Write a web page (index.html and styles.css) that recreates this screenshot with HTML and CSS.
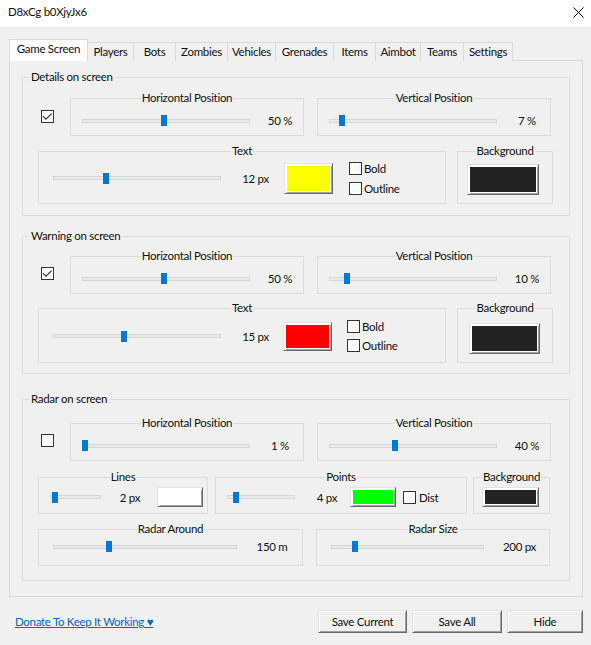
FILE: index.html
```html
<!DOCTYPE html>
<html>
<head>
<meta charset="utf-8">
<title>D8xCg b0XjyJx6</title>
<link rel="stylesheet" href="styles.css">
</head>
<body>
<div class="titlebar">
  <span class="title">D8xCg b0XjyJx6</span>
  <svg class="close" width="11" height="11" viewBox="0 0 11 11"><path d="M0.5 0.5L10.5 10.5M10.5 0.5L0.5 10.5" stroke="#000" stroke-width="1" fill="none"/></svg>
</div>

<div class="tabs">
  <div class="tab on t0">Game Screen</div>
  <div class="tab t1">Players</div>
  <div class="tab t2">Bots</div>
  <div class="tab t3">Zombies</div>
  <div class="tab t4">Vehicles</div>
  <div class="tab t5">Grenades</div>
  <div class="tab t6">Items</div>
  <div class="tab t7">Aimbot</div>
  <div class="tab t8">Teams</div>
  <div class="tab t9">Settings</div>
</div>

<div class="panel">
  <!-- Details on screen -->
  <div class="group g1">
    <div class="gtitle">Details on screen</div>
    <div class="row1">
      <span class="check on"><svg width="11" height="11" viewBox="0 0 11 11"><path d="M1 5.2L4 8.2L9.6 2.6" fill="none" stroke="#333" stroke-width="1.2"/></svg></span>
      <div class="box pos hpos">
        <div class="cap">Horizontal Position</div>
        <div class="srow">
          <div class="track w168"><span class="thumb" style="margin-left:78px"></span></div>
          <span class="val">50 %</span>
        </div>
      </div>
      <div class="box pos vpos">
        <div class="cap">Vertical Position</div>
        <div class="srow">
          <div class="track w168"><span class="thumb" style="margin-left:9px"></span></div>
          <span class="val">7 %</span>
        </div>
      </div>
    </div>
    <div class="row2">
      <div class="box textbox">
        <div class="cap">Text</div>
        <div class="crow">
          <div class="track w168"><span class="thumb" style="margin-left:49px"></span></div>
          <span class="val">12 px</span>
          <span class="sw txt yellow"></span>
          <div class="opts">
            <div class="opt"><span class="check"></span><span class="optlabel">Bold</span></div>
            <div class="opt"><span class="check"></span><span class="optlabel">Outline</span></div>
          </div>
        </div>
      </div>
      <div class="box bgbox">
        <div class="cap">Background</div>
        <div class="crow">
          <span class="sw bgc dark"></span>
        </div>
      </div>
    </div>
  </div>

  <!-- Warning on screen -->
  <div class="group g2">
    <div class="gtitle">Warning on screen</div>
    <div class="row1">
      <span class="check on"><svg width="11" height="11" viewBox="0 0 11 11"><path d="M1 5.2L4 8.2L9.6 2.6" fill="none" stroke="#333" stroke-width="1.2"/></svg></span>
      <div class="box pos hpos">
        <div class="cap">Horizontal Position</div>
        <div class="srow">
          <div class="track w168"><span class="thumb" style="margin-left:78px"></span></div>
          <span class="val">50 %</span>
        </div>
      </div>
      <div class="box pos vpos">
        <div class="cap">Vertical Position</div>
        <div class="srow">
          <div class="track w168"><span class="thumb" style="margin-left:14px"></span></div>
          <span class="val">10 %</span>
        </div>
      </div>
    </div>
    <div class="row2">
      <div class="box textbox">
        <div class="cap">Text</div>
        <div class="crow">
          <div class="track w168"><span class="thumb" style="margin-left:67px"></span></div>
          <span class="val">15 px</span>
          <span class="sw txt red"></span>
          <div class="opts">
            <div class="opt"><span class="check"></span><span class="optlabel">Bold</span></div>
            <div class="opt"><span class="check"></span><span class="optlabel">Outline</span></div>
          </div>
        </div>
      </div>
      <div class="box bgbox">
        <div class="cap">Background</div>
        <div class="crow">
          <span class="sw bgc dark"></span>
        </div>
      </div>
    </div>
  </div>

  <!-- Radar on screen -->
  <div class="group g3">
    <div class="gtitle">Radar on screen</div>
    <div class="row1">
      <span class="check"></span>
      <div class="box pos hpos">
        <div class="cap">Horizontal Position</div>
        <div class="srow">
          <div class="track w168"><span class="thumb" style="margin-left:-1px"></span></div>
          <span class="val">1 %</span>
        </div>
      </div>
      <div class="box pos vpos">
        <div class="cap">Vertical Position</div>
        <div class="srow">
          <div class="track w168"><span class="thumb" style="margin-left:62px"></span></div>
          <span class="val">40 %</span>
        </div>
      </div>
    </div>
    <div class="row2">
      <div class="box lines">
        <div class="cap">Lines</div>
        <div class="srow2">
          <div class="track w51"><span class="thumb" style="margin-left:1px"></span></div>
          <span class="val">2 px</span>
          <span class="sw small white"></span>
        </div>
      </div>
      <div class="box points">
        <div class="cap">Points</div>
        <div class="srow2">
          <div class="track w68"><span class="thumb" style="margin-left:5px"></span></div>
          <span class="val">4 px</span>
          <span class="sw small green"></span>
          <div class="opt dist"><span class="check"></span><span class="optlabel">Dist</span></div>
        </div>
      </div>
      <div class="box bg3">
        <div class="cap">Background</div>
        <div class="srow2">
          <span class="sw bgs dark"></span>
        </div>
      </div>
    </div>
    <div class="row3">
      <div class="box around">
        <div class="cap">Radar Around</div>
        <div class="srow3">
          <div class="track w184"><span class="thumb" style="margin-left:52px"></span></div>
          <span class="val">150 m</span>
        </div>
      </div>
      <div class="box rsize">
        <div class="cap">Radar Size</div>
        <div class="srow3">
          <div class="track w153"><span class="thumb" style="margin-left:20px"></span></div>
          <span class="val">200 px</span>
        </div>
      </div>
    </div>
  </div>
</div>

<div class="footer">
  <a class="link" href="#">Donate To Keep It Working ♥</a>
  <div class="btns">
    <span class="btn b1">Save Current</span>
    <span class="btn b2">Save All</span>
    <span class="btn b3">Hide</span>
  </div>
</div>
</body>
</html>
```

FILE: styles.css
```css
* { box-sizing: border-box; }

body {
  margin: 0;
  width: 591px;
  height: 645px;
  overflow: hidden;
  background: #f0f0f0;
  font-family: Lato, "Liberation Sans", "DejaVu Sans", sans-serif;
  font-size: 11.5px;
  letter-spacing: -0.3px;
  color: #111;
}

/* title bar */
.titlebar {
  height: 27px;
  background: #fff;
  display: flex;
  align-items: center;
  justify-content: space-between;
  padding: 0 7px 4px 8px;
}
.title { font-size: 11.5px; }
.close { display: block; margin-top: 2px; }

/* tabs */
.tabs {
  display: flex;
  align-items: flex-end;
  height: 22px;
  margin: 12px 0 0 9px;
}
.tab {
  flex: none;
  height: 19px;
  border: 1px solid #d9d9d9;
  border-bottom: 0;
  margin-left: -1px;
  display: flex;
  align-items: center;
  justify-content: center;
  padding-bottom: 2px;
  white-space: nowrap;
  background: #f0f0f0;
}
.tab.on {
  height: 22px;
  margin-left: 0;
  background: #fff;
  position: relative;
  z-index: 1;
  padding-bottom: 4px;
}
.t0 { width: 79px; }
.t1 { width: 47px; }
.t2 { width: 43px; }
.t3 { width: 53px; }
.t4 { width: 49px; }
.t5 { width: 59px; }
.t6 { width: 43px; }
.t7 { width: 46px; }
.t8 { width: 44px; }
.t9 { width: 50px; }

/* tab page */
.panel {
  margin: -1px 0 0 9px;
  width: 574px;
  height: 537px;
  border: 1px solid #d9d9d9;
  padding: 0 12px;
}

/* group boxes */
.group {
  border: 1px solid #dcdcdc;
  width: 548px;
}
.g1 { margin-top: 16px; height: 139px; }
.g2 { margin-top: 20px; height: 138px; }
.g3 { margin-top: 25px; height: 182px; }

.gtitle {
  width: max-content;
  margin: -8px 0 0 6px;
  padding: 0 2px;
  background: #f0f0f0;
  line-height: 13px;
  height: 15px;
}

.box {
  flex: none;
  border: 1px solid #dcdcdc;
}
.cap {
  width: max-content;
  margin: -8px auto 0;
  padding: 0 1px;
  background: #f0f0f0;
  line-height: 13px;
  height: 15px;
}

/* row 1: checkbox + positions */
.row1 {
  display: flex;
  align-items: flex-start;
  padding-left: 18px;
}
.g1 .row1 { margin-top: 13px; }
.g2 .row1 { margin-top: 12px; }
.g3 .row1 { margin-top: 16px; }
.row1 > .check { margin-top: 11px; }
.g1 .row1 > .check { margin-top: 12px; }

.pos { width: 234px; height: 38px; }
.hpos { margin-left: 16px; }
.vpos { margin-left: 13px; }

.srow {
  display: flex;
  align-items: center;
  height: 15px;
  margin-top: 7px;
  padding-left: 11px;
}
.pos .val { margin-left: 8px; width: 44px; }

/* checkboxes */
.check {
  flex: none;
  display: flex;
  width: 13px;
  height: 13px;
  border: 1px solid #333;
  background: #fff;
}
.check svg { display: block; }

/* trackbar */
.track {
  flex: none;
  display: flex;
  align-items: center;
  height: 4px;
  border: 1px solid #d6d6d6;
  background: #e7eaea;
}
.thumb {
  flex: none;
  width: 6px;
  height: 11px;
  background: #0078d7;
}
.w168 { width: 168px; }
.w51 { width: 51px; }
.w68 { width: 68px; }
.w184 { width: 184px; }
.w153 { width: 153px; }

.val {
  flex: none;
  text-align: center;
  line-height: 15px;
  white-space: nowrap;
}

/* row 2: text + background */
.row2 {
  display: flex;
  padding-left: 15px;
}
.g1 .row2 { margin-top: 15px; }
.g2 .row2 { margin-top: 14px; }
.g3 .row2 { margin-top: 16px; }

.textbox { width: 408px; height: 53px; }
.bgbox { width: 96px; height: 53px; margin-left: 11px; }
.g2 .textbox, .g2 .bgbox { height: 55px; }

.crow {
  display: flex;
  align-items: center;
  height: 32px;
  margin-top: 3px;
  padding-left: 14px;
}
.g2 .textbox .crow { margin-top: 4px; }
.bgbox .crow { padding-left: 9px; margin-top: 4px; }
.g2 .bgbox .crow { padding-left: 11px; margin-top: 6px; }

.textbox .val { margin-left: 10px; width: 49px; }

/* classic 3D colour buttons */
.sw {
  flex: none;
  display: block;
  border: 1px solid;
  border-color: #e3e3e3 #696969 #696969 #e3e3e3;
  box-shadow: inset 2px 2px #fff, inset -1px -1px #a0a0a0, inset -2px -2px #fff;
}
.yellow { background: #ffff00; }
.red { background: #ff0000; }
.green { background: #00ff00; }
.white { background: #ffffff; }
.dark { background: #232323; }

.sw.txt { width: 49px; height: 31px; margin-left: 4px; }
.g2 .sw.txt { height: 29px; margin-left: 3px; }
.sw.bgc { width: 72px; height: 31px; }
.g2 .sw.bgc { width: 71px; }

.opts {
  flex: none;
  display: flex;
  flex-direction: column;
  gap: 7px;
  margin-left: 16px;
}
.g2 .opts { margin-left: 15px; gap: 6px; }
.opt {
  display: flex;
  align-items: center;
  line-height: 13px;
}
.optlabel { margin-left: 2px; }

/* radar row 2 */
.lines { width: 170px; height: 37px; }
.points { width: 252px; height: 37px; margin-left: 7px; }
.bg3 { width: 77px; height: 37px; margin-left: 6px; }

.srow2 {
  display: flex;
  align-items: center;
  height: 20px;
  margin-top: 2px;
  padding-left: 11px;
}
.lines .val { margin-left: 9px; width: 40px; }
.lines .sw.small { margin-left: 7px; }
.points .val { margin-left: 12px; width: 40px; }
.points .sw.small { margin-left: 3px; }
.sw.small { width: 46px; height: 20px; }
.dist { margin-left: 7px; }
.dist .optlabel { margin-left: 3px; }
.bg3 .srow2 { padding-left: 8px; }
.sw.bgs { width: 57px; height: 20px; }

/* radar row 3 */
.row3 {
  display: flex;
  padding-left: 15px;
  margin-top: 15px;
}
.around { width: 265px; height: 37px; }
.rsize { width: 234px; height: 37px; margin-left: 13px; }
.srow3 {
  display: flex;
  align-items: center;
  height: 15px;
  margin-top: 2px;
  padding-left: 14px;
}
.around .val { margin-left: 11px; width: 48px; }
.rsize .val { margin-left: 11px; width: 49px; }

/* footer */
.footer {
  display: flex;
  align-items: center;
  justify-content: space-between;
  height: 23px;
  margin-top: 13px;
  padding: 0 8px 0 15px;
}
.link {
  color: #0066cc;
  text-decoration: underline;
}
.btns {
  display: flex;
  gap: 5px;
}
.btn {
  flex: none;
  height: 23px;
  display: flex;
  align-items: center;
  justify-content: center;
  padding-bottom: 1px;
  background: #f0f0f0;
  border: 1px solid;
  border-color: #e3e3e3 #696969 #696969 #e3e3e3;
  box-shadow: inset 1px 1px #fff, inset -1px -1px #a0a0a0;
}
.b1 { width: 89px; }
.b2 { width: 90px; }
.b3 { width: 76px; }
```
